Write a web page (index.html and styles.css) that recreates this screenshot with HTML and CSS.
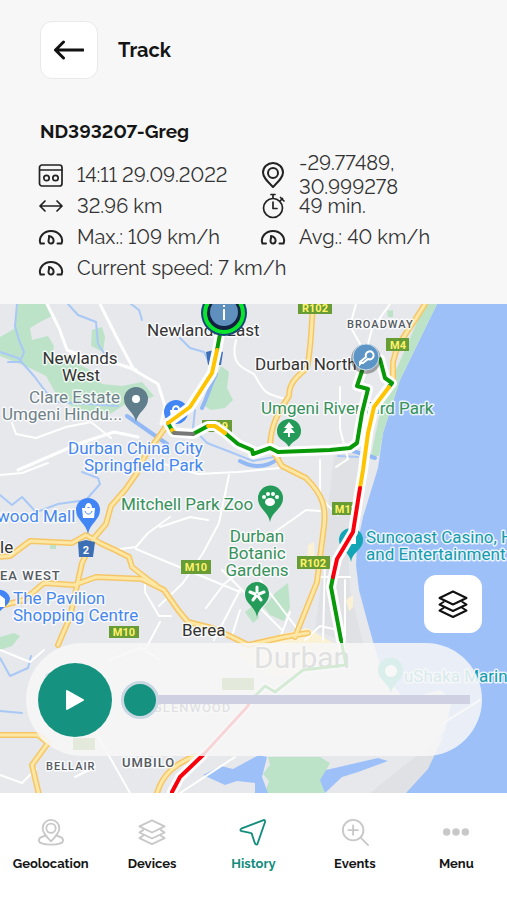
FILE: index.html
```html
<!DOCTYPE html>
<html lang="en">
<head>
<meta charset="utf-8">
<meta name="viewport" content="width=device-width, initial-scale=1">
<title>Track</title>
<link rel="stylesheet" href="styles.css">
</head>
<body>
<svg class="defs" aria-hidden="true">
  <symbol id="gauge" viewBox="0 0 26 26"><path d="M6 19.500H2.500C0 13.500 5.500 7 13 7s13 6.500 10.500 12.500H19.500M11 12c3 .5 5 2.500 4.500 5.500-.4 2.500-4 2.800-4.800.5-.7-2 .8-3.500.3-6z"/></symbol>
  <symbol id="layers" viewBox="0 0 30 30"><path d="M15 2.500 28.500 9 15 15.500 1.500 9zM5.500 13 1.500 15.500 15 22l13.500-6.500-4-2.500M5.500 19l-4 2.500L15 28l13.500-6.500-4-2.500"/></symbol>
</svg>
<div class="app">
  <header class="header">
    <div class="title-bar">
      <button class="square-button" type="button" aria-label="Back">
        <svg class="icon arrow" viewBox="0 0 30 20"><path d="M29 10H2M9.500 2 1.500 10l8 8"/></svg>
      </button>
      <h1>Track</h1>
    </div>
    <h2>ND393207-Greg</h2>
    <ul class="facts">
      <li><svg class="icon" viewBox="0 0 26 26"><rect x="1.500" y="3" width="22.500" height="21" rx="2.500"/><path d="M2 8h22"/><circle cx="8.500" cy="16" r="2.700"/><circle cx="17.500" cy="16" r="2.700"/></svg><span>14:11 29.09.2022</span></li>
      <li><svg class="icon bold" viewBox="0 0 26 26"><path d="M13 25C8 20 3 15.500 3 10.500a10 9.500 0 0 1 20 0C23 15.500 18 20 13 25z"/><circle cx="13" cy="11" r="5"/></svg><span>-29.77489, 30.999278</span></li>
      <li><svg class="icon" viewBox="0 0 26 26"><path d="M2 13h22M7 8l-5 5 5 5M19 8l5 5-5 5"/></svg><span>32.96 km</span></li>
      <li><svg class="icon" viewBox="0 0 26 26"><circle cx="13" cy="15" r="9.500"/><path d="M13 5V1.500M11 1.500h4M13 9v6.500h4M20 8l2.500-2.500M20.500 4.500l3.500 3.500"/></svg><span>49 min.</span></li>
      <li><svg class="icon bold"><use href="#gauge"/></svg><span>Max.: 109 km/h</span></li>
      <li><svg class="icon bold"><use href="#gauge"/></svg><span>Avg.: 40 km/h</span></li>
      <li class="wide"><svg class="icon bold"><use href="#gauge"/></svg><span>Current speed: 7 km/h</span></li>
    </ul>
  </header>

  <main class="map">
    <svg class="map-canvas" viewBox="0 304 507 489" preserveAspectRatio="xMidYMid slice" role="img" aria-label="Map of Durban with the driven route">
      <rect class="land" x="-500" y="0" width="1600" height="1200"/>
      <path class="sea" d="M437 304 400 380 383 433 378 468 363 517 357 545 356 565 359 590 367 620 374 645 382 672 405 700 440 690 452 700 445 730 426 757 406 793H1100V304z"/>
      <g class="park">
        <path d="M425 304h12L400 380 383 433 379 456h-8l4-20 9-40 16-35z"/>
        <path d="M18 304h30l4 12-12 6-10 6 2 12 16-4 6 10-2 12 14-4 8 8 16 8 12 14 20 2 20-4 12 14-10 5-18 3-16 10-34-4-20-16-10-18-16-8-30-12V337l14-8z"/>
        <path d="M92 330l10-3 3 10-2 15-12-6z"/>
        <path d="M221 366l8 6-2 16 6 12-8 8-14 2-10-6 10-15z"/>
        <path d="M276 592l12-9 2 24-6 14-14-6-6-8zM245 612l10-8 4 14-6 5zM342 474l14 2-4 25-10-6zM330 515l8 2-2 8-6-1zM0 637l14-4 6 3-8 10-12 4zM50 543l6 1v5h-6zM387 311l6-1v7h-5z"/>
        <path d="M268 757h52l10 6-9 17 4 13h-60l4-12-6-7 7-9z"/>
      </g>
      <path class="built" d="M335 450c-8 60-10 90-12 120l-8 60 50 20-15-60-2-50 18-70-12-18zM370 793l50-40 24-18-16 34-22 24z"/>
      <path class="warm" d="M237 655l20-15 50-12 35 20-22 18-44 12zM308 545l6-3 1 20-8 5zM346 600l7-5v12l-4 4z"/>
      <path class="sea" d="M203 775l18-9 12 3 26-14 8 2-5 20 6 16h-13v-10l-18-2-12 4zM326 770l52-12 10 3-30 11-16 5-17 16-5-13z"/>
      <g class="water">
        <path d="M17 304l-2 22 4 14 5 12-4 10-12 0M0 352l18 6 16 18 12 16 12 10 60 4M68 304l10 11 18 7 2 22 8 12 6 3M131 304l8 6 3 10M180 338l10 10 14 4 6 12M195 410l-2 18 14 15 26 10 20 8 26-5M338 456l20 1M0 495l12 10 10-8 14 15M82 472l16 6 2 6-14 16-28 4-24 9M0 658l10 18 18-8 3-12M0 711l22 2"/>
      </g>
      <path class="river" d="M216 374c-8 16-8 22-14 34M127 416l40 28M240 461c15 8 28 6 39-3M353 451l22 7"/>
      <g class="minor">
        <path d="M12 423l4 11 20 4 30-11 25-5 20 16M236 340c-6 24 6 28 18 34 10 18 10 20 32 25M356 304l-6 22 14 25M390 304l-18 25-8 30M340 387v42l8 30-12 8M320 460v38l18 17"/>
        <path class="main-road" d="M47 304l12 24 8 22 18 7 33 7 18 6M100 304l16 32 18 34 24 14 7 22-4 18M18 470l60-26 36-12 24 5"/>
        <path d="M0 475l22-2 26-10M160 463l38 11 40-2 42-4M229 475l-10 48-16 30-20 30-24 23M160 527l30-10 18 3M120 549l16-2 12-14 22-16M136 549l24 10 80 33M145 580v12l14 24h12M272 534l20-14 14-10 14 1M206 608l18-24 18-14M240 610l-8 26M222 570l60 60M260 580l42 55M214 640l26-50M290 612l-10 26M130 793l-35-62M160 660l-20-12-30 12M0 650l30 12 14-12M75 777l20-10M0 775l22 8 14-14M180 793l55-36M480 700l-40 25M325 560l-2 80M320 577h30M345 580v56M305 640l15-14 18 4M160 622l-15 28"/>
      </g>
      <g class="highway">
        <path class="edge" d="M-5 557l15-1 20-15 42 2 14-8 14 8 15 7 14 7 3 10 18 14 6 4M137 473l-12 17-14 16-5 18-12 14-12 25-12 54-12 28M0 606l24-6 20-17 30 2 22-8 24 1 22 1 22 11 14 20 10 12 24 6 20 9 16 8 36-8 24-4M313 304c-2 30-2 45-6 64-12 10-18 16-18 28-13 20-18 30-19 50l12 20 24 12c18 18 20 30 18 48l-7 56-22 55M425 304c-18 30-28 38-32 58v18M170 421l-25 35-8 17M0 735h38l10 8-16 22 8 34M157 793c6-20 20-30 38-37"/>
        <path class="fill" d="M-5 557l15-1 20-15 42 2 14-8 14 8 15 7 14 7 3 10 18 14 6 4M137 473l-12 17-14 16-5 18-12 14-12 25-12 54-12 28M0 606l24-6 20-17 30 2 22-8 24 1 22 1 22 11 14 20 10 12 24 6 20 9 16 8 36-8 24-4M313 304c-2 30-2 45-6 64-12 10-18 16-18 28-13 20-18 30-19 50l12 20 24 12c18 18 20 30 18 48l-7 56-22 55M425 304c-18 30-28 38-32 58v18M170 421l-25 35-8 17M0 735h38l10 8-16 22 8 34M157 793c6-20 20-30 38-37"/>
      </g>

      <g class="shield">
        <rect x="298" y="302" width="34" height="12"/><text x="315" y="312">R102</text>
        <rect x="386" y="338" width="23" height="13"/><text x="398" y="349">M4</text>
        <rect x="202" y="420" width="30" height="12"/><text x="217" y="430">M19</text>
        <rect x="332" y="502" width="26" height="13"/><text x="346" y="513">M12</text>
        <rect x="181" y="560" width="30" height="14"/><text x="196" y="571">M10</text>
        <rect x="297" y="556" width="33" height="13"/><text x="313" y="567">R102</text>
        <rect x="109" y="626" width="30" height="12"/><text x="124" y="636">M10</text>
        <rect x="222" y="678" width="32" height="12"/>
        <rect x="73" y="738" width="22" height="12"/>
      </g>
      <g class="national"><path d="M78 542l8-2 9 2-2 15H79z"/><text x="86" y="554">2</text><path d="M206 352l8-2 9 2-2 13h-13z"/><path d="M45 674l7-2 8 2-2 12H47z"/></g>

      <g class="pins">
        <path fill="#607d8b" d="M136 422c-2-11-12-13-12-23a12 12 0 0 1 24 0c0 10-10 12-12 23z"/><circle cx="136" cy="399" r="4" fill="#fff"/>
        <path fill="#4285f4" d="M88 534c-2-11-12-14-12-24a12 12 0 0 1 24 0c0 10-10 13-12 24z"/><path fill="#fff" d="M82 508h13l-1 10H83zM85 508a3.500 5 0 0 1 7 0h-2a2 3 0 0 0-3 0z"/><path class="smile" d="M85 511c1 4 6 4 7 0"/>
        <path fill="#4285f4" d="M-2 617c0-9 12-10 12-19A12 12 0 0 0-12 596z"/><path fill="#fff" d="M0 595l5 4v8H0z"/>
        <circle cx="176" cy="412" r="12" fill="#4285f4"/><path fill="#fff" d="M170 410h12l-1 8h-10z"/><path class="bag" d="M173 410c0-5 6-5 6 0"/>
        <path fill="#249b58" d="M289 448c-2-8-12-7-12-17a12 12 0 0 1 24 0c0 10-10 9-12 17z"/><path fill="#fff" d="M289 422l5 6h-3l4 5h-5v4h-2v-4h-5l4-5h-3z"/>
        <path fill="#249b58" d="M270 522c-2-11-12-13-12-24a12 12 0 0 1 25 0c0 11-11 13-13 24z"/><g fill="#fff"><ellipse cx="270" cy="502" rx="5" ry="4"/><circle cx="264" cy="497" r="2"/><circle cx="268" cy="494" r="2"/><circle cx="273" cy="494" r="2"/><circle cx="277" cy="497" r="2"/></g>
        <path fill="#249b58" d="M257 617c-2-11-12-13-12-23a12 12 0 0 1 24 0c0 10-10 12-12 23z"/><g class="petals"><path d="M257 592v-5M255 594l-5-2M259 594l5-2M256 596l-3 4M258 596l3 4"/></g>
        <path fill="#12a5b5" d="M351 562c-1-10-12-12-12-22a12 12 0 0 1 24 0c0 10-11 12-12 22z"/><path fill="#fff" d="M350 537h6v7h-6z"/>
        <path fill="#30b6a0" d="M391 693c-2-10-13-13-13-23a12 12 0 0 1 25 0c0 10-10 13-12 23z"/><circle cx="391" cy="671" r="6" fill="#fff"/>
      </g>

      <g class="labels">
        <g class="town">
          <text x="147" y="336">Newlands East</text>
          <text class="mid" x="80" y="364">Newlands</text><text class="mid" x="81" y="381">West</text>
          <text x="255" y="370">Durban North</text>
          <text x="0" y="553">le</text>
          <text x="182" y="636">Berea</text>
        </g>
        <g class="suburb">
          <text class="small" x="347" y="328">BROADWAY</text>
          <text x="0" y="580">EA WEST</text>
          <text x="153" y="712">GLENWOOD</text>
          <text class="small" x="46" y="770">BELLAIR</text>
          <text x="122" y="767">UMBILO</text>
        </g>
        <g class="grey"><text x="29" y="403">Clare Estate</text><text x="2" y="420">Umgeni Hindu...</text></g>
        <g class="blue">
          <text x="68" y="454">Durban China City</text><text x="84" y="471">Springfield Park</text>
          <text x="-3" y="522">wood Mall</text>
          <text x="13" y="604">The Pavilion</text><text x="13" y="621">Shopping Centre</text>
        </g>
        <g class="green">
          <text x="261" y="414">Umgeni River Bird Park</text>
          <text x="121" y="510">Mitchell Park Zoo</text>
          <text class="mid" x="257" y="542">Durban</text><text class="mid" x="257" y="559">Botanic</text><text class="mid" x="257" y="576">Gardens</text>
        </g>
        <g class="teal">
          <text x="366" y="543">Suncoast Casino, H</text><text x="366" y="560">and Entertainment</text>
          <text x="404" y="682">uShaka Marin</text>
        </g>
      </g>

      <g class="route">
        <path class="casing" d="M220 334l-3 16-5 23-22 34-22 16 5 9 20 2 15-8h7l10 7 13 11 14 6 1 4 17-6 8 4 52-2 20-2 7-5 5-30 6-24-11-3 5-15M380 359l5 19 7 5-3 4-15 20-6 26-5 37-3 18-7 44-16 27-4 18-2 10 10 53M203 755l-23 22-8 15"/>
        <path class="casing narrow" d="M341 640l5 25-43 5-28 22-10-6-18 21-44 48"/>
      </g>
      <g class="labels town"><text class="city" x="254" y="668">Durban</text></g>
      <g class="route">
        <path class="go" d="M220 334l-3 16M168 423l5 9M193 434l15-8M225 433l13 11 14 6 1 4 17-6 8 4 52-2 20-2 7-5 5-30 6-24-11-3 5-15M380 359l5 19 7 5-3 4M333 577l-2 10 10 53"/>
        <path class="go thin" d="M341 640l5 25-43 5-28 22-10-6-12 12"/>
        <path class="slow" d="M217 350l-5 23-22 34-22 16M208 426h7l10 7M389 387l-15 20-6 26-5 37-3 18M172 430l3 3"/>
        <path class="idle" d="M174 433l19 1"/>
        <path class="fast" d="M360 488l-7 44-16 27-4 18M203 755l-23 22-8 15"/>
        <path class="fast thin" d="M253 698l-6 9-44 48"/>
      </g>

      <g class="marker">
        <circle cx="224" cy="313" r="23" fill="#164875"/><circle cx="224" cy="313" r="19" fill="#10223f"/><circle class="ring" cx="224" cy="313" r="19"/>
        <circle cx="224" cy="312" r="14" fill="#5f90bd"/><path class="glyph" d="M224 309v11M224 305v2"/>
        <circle class="shadow" cx="366" cy="359" r="15"/><circle class="disc" cx="366" cy="357" r="13"/>
        <path class="key" d="M366 357a4 4 0 1 1 2 2l-5 4h-2l-1 1v-2z"/>
      </g>
    </svg>

    <button class="square-button layers-button" type="button" aria-label="Map layers">
      <svg class="icon"><use href="#layers"/></svg>
    </button>
    <div class="player">
      <button class="play" type="button" aria-label="Play"><svg viewBox="0 0 22 24"><path d="M3 3v18l16-9z"/></svg></button>
      <input type="range" min="0" max="100" value="0" aria-label="Track position">
    </div>
  </main>

  <nav class="tabs">
    <a href="#geolocation"><svg class="icon" viewBox="0 0 30 30"><path d="M15 25C10 20 6 15.500 6 11a9 9 0 0 1 18 0c0 4.500-4 9-9 14z"/><circle cx="15" cy="11" r="5"/><path d="M9 19c-5 1-7 3-7 5 0 6 26 6 26 0 0-2-2-4-7-5"/></svg>Geolocation</a>
    <a href="#devices"><svg class="icon"><use href="#layers"/></svg>Devices</a>
    <a class="active" href="#history" aria-current="page"><svg class="icon" viewBox="0 0 30 30"><path d="M27 2 3 11c-2 1-2 3 0 3l9 2c1 0 2 1 2 2l3 9c1 2 3 2 3 0l8-23c0-1 0-2-1-2z"/></svg>History</a>
    <a href="#events"><svg class="icon" viewBox="0 0 30 30"><circle cx="13" cy="13" r="11"/><path d="M21 21l8 8M13 8v10M8 13h10"/></svg>Events</a>
    <a href="#menu"><svg class="icon dots" viewBox="0 0 30 30"><circle cx="5" cy="15" r="4"/><circle cx="15" cy="15" r="4"/><circle cx="25" cy="15" r="4"/></svg>Menu</a>
  </nav>
</div>
</body>
</html>
```
FILE: styles.css
```css
* { box-sizing: border-box; }
body {
  margin: 0;
  font-family: Raleway, Lato, sans-serif;
  font-variant-numeric: lining-nums;
  color: #151515;
  background: #fff;
}
button { padding: 0; border: 0; cursor: pointer; }
h1, h2, ul { margin: 0; padding: 0; }
.defs { position: absolute; width: 0; height: 0; }
.app { display: flex; flex-direction: column; min-height: 100vh; }
.icon {
  flex: none;
  width: 26px;
  height: 26px;
  fill: none;
  stroke: currentColor;
  stroke-width: 2;
  stroke-linecap: round;
  stroke-linejoin: round;
}

.header { padding: 21px 38px; background: #f7f7f7; }
.title-bar { display: flex; align-items: center; gap: 20px; padding-left: 2px; }
.square-button {
  display: grid;
  place-items: center;
  width: 58px;
  height: 58px;
  color: #111;
  background: #fff;
  border: 1px solid #e9e9e9;
  border-radius: 12px;
}
.arrow { width: 30px; height: 20px; stroke-width: 3; }
h1, h2 { font-weight: 700; line-height: 24px; }
h1 { font-size: 20px; }
h2 { margin-top: 40px; padding-left: 2px; font-size: 19px; }
.facts {
  display: grid;
  grid-template-columns: 222px 1fr;
  grid-auto-rows: 31px;
  margin-top: 16px;
  list-style: none;
  font-size: 20px;
  line-height: 24px;
  color: #333;
}
.facts li { display: flex; align-items: center; gap: 13px; }
.facts li span { max-width: 170px; }
.facts .icon { color: #222; stroke-width: 1.7; }
.facts .bold { stroke-width: 2; }
.facts .wide { grid-column: 1 / -1; }
.facts .wide span { max-width: none; }

.map { position: relative; flex: 1 1 0; min-height: 400px; overflow: hidden; background: #e8eaed; }
.map-canvas { position: absolute; inset: 0; width: 100%; height: 100%; }
.land { fill: #e6e8ec; }
.sea { fill: #9dc0f9; }
.park { fill: #bce3c8; }
.built { fill: #dfe1e5; }
.warm { fill: #fbf1d5; }
.water, .river, .minor, .highway, .route { fill: none; stroke-linejoin: round; stroke-linecap: round; }
.water { stroke: #a9c8f6; stroke-width: 2; }
.river { stroke: #93b9f5; stroke-width: 4; fill: none; }
.minor { stroke: #fff; stroke-width: 2; }
.minor .main-road { stroke-width: 3; }
.edge { stroke: #f6c666; stroke-width: 6; }
.fill { stroke: #fde7a5; stroke-width: 3; }
.map text { font-family: Roboto, sans-serif; }
.shield rect { fill: #689d35; }
.shield text { fill: #fff26b; font-size: 11px; font-weight: 700; text-anchor: middle; }
.national path { fill: #3d6fb4; }
.national text { fill: #fff; font-size: 11px; font-weight: 700; text-anchor: middle; }
.smile { fill: none; stroke: #4285f4; stroke-width: 1; }
.bag { fill: none; stroke: #fff; stroke-width: 2; }
.petals { fill: none; stroke: #fff; stroke-width: 3; stroke-linecap: round; }
.labels text { font-size: 17px; paint-order: stroke; stroke: #fffc; stroke-width: 3; stroke-linejoin: round; }
.labels .mid { text-anchor: middle; }
.town { fill: #333; }
.labels .city { font-size: 30px; fill: #555; }
.suburb { fill: #555b62; font-weight: 500; }
.labels .suburb text { font-size: 13px; letter-spacing: 1px; }
.labels .suburb .small { font-size: 11px; }
.grey { fill: #6f8289; }
.blue { fill: #4587ef; }
.green { fill: #36915a; }
.teal { fill: #149cac; }
.casing { stroke: #fff; stroke-width: 10; }
.route { stroke-width: 4; }
.route .thin { stroke-width: 3; }
.route .narrow { stroke-width: 6; }
.go { stroke: #079907; }
.slow { stroke: #ffc400; }
.idle { stroke: #777; }
.fast { stroke: #f8000c; }
.ring { fill: none; stroke: #08e52c; stroke-width: 4; }
.glyph { stroke: #fff; stroke-width: 2; }
.shadow { fill: #3336; }
.disc { fill: #5b94c5; stroke: #c8dced; stroke-width: 1; }
.key { fill: none; stroke: #fff; stroke-width: 2; }

.layers-button { position: absolute; right: 25px; bottom: 160px; border-color: #fff; }
.layers-button .icon { width: 30px; height: 30px; }
.player {
  position: absolute;
  right: 25px;
  bottom: 37px;
  left: 26px;
  display: flex;
  align-items: center;
  gap: 9px;
  height: 113px;
  padding: 0 12px;
  background: rgb(247 247 247 / 86%);
  border-radius: 57px;
}
.play {
  display: grid;
  flex: none;
  place-items: center;
  width: 74px;
  height: 74px;
  background: #169380;
  border-radius: 50%;
}
.play svg { width: 22px; height: 24px; fill: #fff; stroke: #fff; stroke-width: 2; stroke-linejoin: round; }
input[type="range"] {
  flex: 1;
  min-width: 0;
  height: 38px;
  margin: 0;
  background: linear-gradient(#cfd1e3, #cfd1e3) 18px center / calc(100% - 18px) 9px no-repeat;
  border-radius: 5px;
  appearance: none;
}
input[type="range"]::-webkit-slider-thumb {
  width: 38px;
  height: 38px;
  background: #169380;
  border: 3px solid #c9d7e3;
  border-radius: 50%;
  appearance: none;
}

.tabs { display: grid; grid-template-columns: repeat(5, 1fr); height: 107px; padding-top: 24px; background: #fff; }
.tabs a {
  display: flex;
  flex-direction: column;
  align-items: center;
  gap: 8px;
  font-size: 13px;
  font-weight: 700;
  line-height: 18px;
  color: #151515;
  text-decoration: none;
}
.tabs .icon { width: 28px; height: 30px; color: #c8c8c8; }
.tabs .dots { fill: currentColor; stroke: none; }
.tabs .active, .tabs .active .icon { color: #128c7c; }
```
